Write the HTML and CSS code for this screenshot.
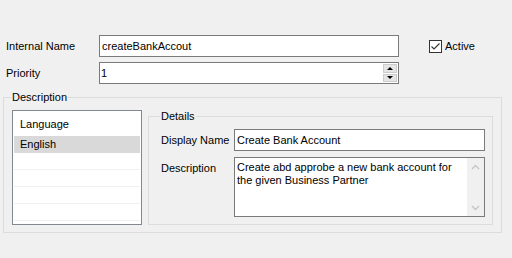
FILE: index.html
```html
<!DOCTYPE html>
<html lang="en">
<head>
    <meta charset="UTF-8">
    <title>Activity</title>
    <link rel="stylesheet" href="styles.css">
</head>
<body>
    <div class="window">
        <div class="field-row">
            <span class="field-label">Internal Name</span>
            <div class="text-box name-box">createBankAccout</div>
            <div class="check">
                <span class="check-box">
                    <svg width="11" height="11" viewBox="0 0 11 11"><polyline points="1.5,5.5 4,8 9.5,2.5" fill="none" stroke="#333" stroke-width="1.1"/></svg>
                </span>
                Active
            </div>
        </div>
        <div class="field-row priority-row">
            <span class="field-label">Priority</span>
            <div class="text-box spin-box">
                <span class="spin-value">1</span>
                <div class="spin-buttons">
                    <span class="spin-btn"><span class="arrow-up"></span></span>
                    <span class="spin-btn"><span class="arrow-down"></span></span>
                </div>
            </div>
        </div>
        <fieldset class="group desc-group">
            <legend>Description</legend>
            <div class="lang-list">
                <div class="list-head">Language</div>
                <div class="list-row selected">English</div>
                <div class="list-row"></div>
                <div class="list-row"></div>
                <div class="list-row"></div>
                <div class="list-row"></div>
            </div>
            <fieldset class="group details">
                <legend>Details</legend>
                <div class="details-grid">
                    <span class="detail-label">Display Name</span>
                    <div class="text-box">Create Bank Account</div>
                    <span class="detail-label top">Description</span>
                    <div class="memo">
                        <div class="memo-text">Create abd approbe a new bank account for the given Business Partner</div>
                        <div class="memo-scroll">
                            <svg width="9" height="6" viewBox="0 0 9 6"><polyline points="1,5 4.5,1.5 8,5" fill="none" stroke="#c4c4c4" stroke-width="1.3"/></svg>
                            <svg width="9" height="6" viewBox="0 0 9 6"><polyline points="1,1 4.5,4.5 8,1" fill="none" stroke="#c4c4c4" stroke-width="1.3"/></svg>
                        </div>
                    </div>
                </div>
            </fieldset>
        </fieldset>
    </div>
</body>
</html>
```

FILE: styles.css
```css
body {
    margin: 0;
    background-color: #f0f0f0;
    font-family: "Liberation Sans", Arial, sans-serif;
    font-size: 11px;
    color: #000;
}
.window {
    width: 512px;
    height: 258px;
    padding-top: 35px;
    box-sizing: border-box;
}
.field-row {
    display: flex;
    align-items: center;
    height: 22px;
    padding-left: 6px;
}
.priority-row {
    margin-top: 5px;
}
.field-label {
    width: 93px;
}
.text-box {
    height: 22px;
    box-sizing: border-box;
    border: 1px solid #7a7a7a;
    background-color: #fff;
    padding: 0 2px;
    line-height: 20px;
    white-space: nowrap;
}
.name-box {
    width: 300px;
}
.check {
    display: flex;
    align-items: center;
    margin-left: 30px;
}
.check-box {
    width: 13px;
    height: 13px;
    box-sizing: border-box;
    border: 1px solid #333;
    background-color: #fff;
    margin-right: 3px;
    display: flex;
}
.spin-box {
    width: 300px;
    display: flex;
    padding: 0 1px 0 1px;
}
.spin-value {
    flex: 1;
}
.spin-buttons {
    display: flex;
    flex-direction: column;
    gap: 1px;
    padding: 1px 0;
}
.spin-btn {
    width: 14px;
    height: 9px;
    box-sizing: border-box;
    background-color: #e5e5e5;
    border: 1px solid #cdcdcd;
    display: flex;
    align-items: center;
    justify-content: center;
}
.arrow-up {
    border-left: 3px solid transparent;
    border-right: 3px solid transparent;
    border-bottom: 3px solid #000;
}
.arrow-down {
    border-left: 3px solid transparent;
    border-right: 3px solid transparent;
    border-top: 3px solid #000;
}
.group {
    border: 1px solid #dcdcdc;
    margin: 0;
    min-width: 0;
}
.group legend {
    padding: 0 1px;
    margin-left: -1px;
    line-height: 14px;
}
.desc-group {
    margin: 6px 10px 0 3px;
    padding: 6px 8px 7px 8px;
    display: flex;
    gap: 6px;
    align-items: flex-start;
}
.lang-list {
    width: 130px;
    height: 115px;
    box-sizing: border-box;
    border: 1px solid #828790;
    background-color: #fff;
    padding: 1px;
}
.list-head {
    height: 24px;
    line-height: 24px;
    padding-left: 6px;
}
.list-row {
    height: 16px;
    line-height: 16px;
    padding-left: 6px;
    border-bottom: 1px solid #f0f0f0;
}
.list-row.selected {
    background-color: #d9d9d9;
    border-bottom-color: #d9d9d9;
}
.details {
    flex: 1;
    margin-top: -1px;
    padding: 6px 7px 7px 12px;
}
.details-grid {
    display: grid;
    grid-template-columns: 73px 251px;
    row-gap: 6px;
    align-items: center;
}
.detail-label.top {
    align-self: start;
    padding-top: 5px;
}
.memo {
    height: 60px;
    box-sizing: border-box;
    border: 1px solid #7a7a7a;
    background-color: #fff;
    display: flex;
}
.memo-text {
    flex: 1;
    padding: 3px 2px 0 2px;
    line-height: 13px;
}
.memo-scroll {
    width: 17px;
    background-color: #f0f0f0;
    display: flex;
    flex-direction: column;
    justify-content: space-between;
    align-items: center;
    padding: 6px 0 5px;
}
```
